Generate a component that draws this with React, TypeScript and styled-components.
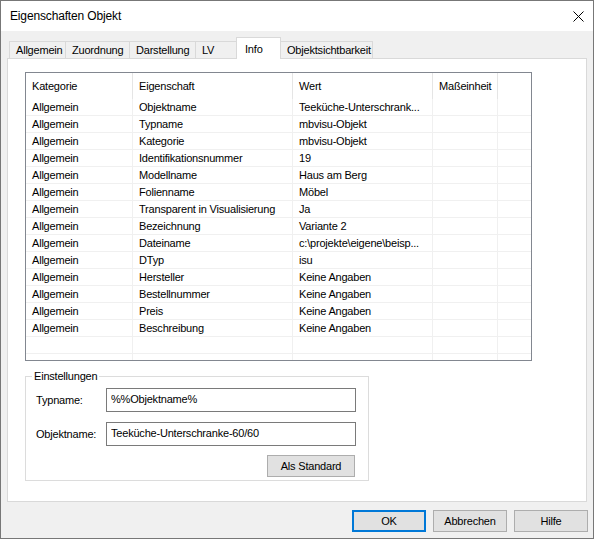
import React from "react";
import styled, { createGlobalStyle, css } from "styled-components";

const GlobalStyle = createGlobalStyle`
  body {
    margin: 0;
    background: #fff;
    font-family: "Liberation Sans", Arial, sans-serif;
    font-size: 11px;
    letter-spacing: -0.2px;
    color: #000;
  }
`;

const Window = styled.div`
  width: 594px;
  height: 539px;
  box-sizing: border-box;
  border: 1px solid #777;
  background: #f0f0f0;
  display: flex;
  flex-direction: column;
`;

const TitleBar = styled.div`
  height: 30px;
  flex: none;
  background: #fff;
  display: flex;
  align-items: center;
  justify-content: space-between;
  padding: 0 9px 0 9px;
  font-size: 12px;
  letter-spacing: -0.15px;
`;

const Body = styled.div`
  flex: 1;
  padding: 6px 6px 0 6px;
  display: flex;
  flex-direction: column;
`;

const TabStrip = styled.div`
  display: flex;
  align-items: flex-end;
  height: 21px;
  padding-left: 2px;
`;

const Tab = styled.div<{ $w: number; $active?: boolean }>`
  box-sizing: border-box;
  width: ${p => p.$w}px;
  height: 17px;
  margin-left: -1px;
  padding-left: 6px;
  border: 1px solid #d9d9d9;
  border-bottom: none;
  background: #f0f0f0;
  display: flex;
  align-items: center;
  white-space: nowrap;
  &:first-child {
    margin-left: 0;
  }

  ${p =>
    p.$active &&
    css`
      height: 22px;
      margin-bottom: -1px;
      padding-left: 8px;
      background: #fff;
      position: relative;
      z-index: 1;
    `}
`;

const Panel = styled.div`
  box-sizing: border-box;
  width: 580px;
  height: 444px;
  background: #fff;
  border: 1px solid #d9d9d9;
  padding: 13px 0 0 17px;
`;

const ListView = styled.div`
  box-sizing: border-box;
  width: 507px;
  height: 289px;
  border: 1px solid #828790;
  overflow: hidden;
  background: #fff;
`;

const COLS = "107px 160px 140px 65px 1fr";

const HeaderRow = styled.div`
  display: grid;
  grid-template-columns: ${COLS};
  height: 26px;
`;

const HeaderCell = styled.div`
  display: flex;
  align-items: center;
  padding-left: 6px;
  border-right: 1px solid #e5e5e5;
  &:last-child {
    border-right: none;
  }
`;

const Row = styled.div`
  display: grid;
  grid-template-columns: ${COLS};
  height: 17px;
  box-sizing: border-box;
  border-bottom: 1px solid #f0f0f0;
`;

const Cell = styled.div`
  display: flex;
  align-items: center;
  padding-left: 6px;
  white-space: nowrap;
  overflow: hidden;
  border-right: 1px solid #f0f0f0;
  &:last-child {
    border-right: none;
  }
`;

const GroupBox = styled.fieldset`
  box-sizing: border-box;
  width: 344px;
  margin: 9px 0 0 0;
  padding: 5px 12px 3px 6px;
  border: 1px solid #dcdcdc;
  min-width: 0;
`;

const Legend = styled.legend`
  padding: 0 2px;
  line-height: 13px;
`;

const FieldRow = styled.div<{ $gap?: number }>`
  display: flex;
  align-items: center;
  height: 24px;
  padding-left: 4px;
  margin-top: ${p => p.$gap ?? 0}px;
`;

const FieldLabel = styled.label`
  width: 70px;
  flex: none;
`;

const TextBox = styled.input`
  flex: 1;
  min-width: 0;
  box-sizing: border-box;
  height: 24px;
  border: 1px solid #7a7a7a;
  padding: 0 0 2px 4px;
  margin: 0;
  font-family: "Liberation Sans", Arial, sans-serif;
  font-size: 11px;
  letter-spacing: -0.2px;
  color: #000;
  background: #fff;
  outline: none;
`;

const ButtonLine = styled.div`
  display: flex;
  justify-content: flex-end;
  margin-top: 9px;
  padding-right: 1px;
`;

const Button = styled.button<{ $w: number; $default?: boolean }>`
  box-sizing: border-box;
  width: ${p => p.$w}px;
  height: 22px;
  margin: 0;
  padding: 0;
  background: #e1e1e1;
  border: 1px solid #adadad;
  font-family: "Liberation Sans", Arial, sans-serif;
  font-size: 11px;
  letter-spacing: -0.2px;
  color: #000;

  ${p =>
    p.$default &&
    css`
      border: 2px solid #0078d7;
    `}
`;

const DialogButtons = styled.div`
  display: flex;
  justify-content: flex-end;
  gap: 7px;
  margin: 8px -1px 0 0;
`;

const tabs = [
  { label: "Allgemein", w: 57 },
  { label: "Zuordnung", w: 65 },
  { label: "Darstellung", w: 67 },
  { label: "LV", w: 42 },
  { label: "Info", w: 45, active: true },
  { label: "Objektsichtbarkeit", w: 93 },
];

const rows: [string, string][] = [
  ["Objektname", "Teeküche-Unterschrank..."],
  ["Typname", "mbvisu-Objekt"],
  ["Kategorie", "mbvisu-Objekt"],
  ["Identifikationsnummer", "19"],
  ["Modellname", "Haus am Berg"],
  ["Folienname", "Möbel"],
  ["Transparent in Visualisierung", "Ja"],
  ["Bezeichnung", "Variante 2"],
  ["Dateiname", "c:\\projekte\\eigene\\beisp..."],
  ["DTyp", "isu"],
  ["Hersteller", "Keine Angaben"],
  ["Bestellnummer", "Keine Angaben"],
  ["Preis", "Keine Angaben"],
  ["Beschreibung", "Keine Angaben"],
];

const CloseIcon = () => (
  <svg width="11" height="11" viewBox="0 0 11 11">
    <path d="M0.5 0.5 L10.5 10.5 M10.5 0.5 L0.5 10.5" stroke="#000" strokeWidth="1" />
  </svg>
);

export default function App() {
  return (
    <>
      <GlobalStyle />
      <Window>
        <TitleBar>
          <span>Eigenschaften Objekt</span>
          <CloseIcon />
        </TitleBar>
        <Body>
          <TabStrip>
            {tabs.map(t => (
              <Tab key={t.label} $w={t.w} $active={t.active}>
                {t.label}
              </Tab>
            ))}
          </TabStrip>
          <Panel>
            <ListView>
              <HeaderRow>
                <HeaderCell>Kategorie</HeaderCell>
                <HeaderCell>Eigenschaft</HeaderCell>
                <HeaderCell>Wert</HeaderCell>
                <HeaderCell>Maßeinheit</HeaderCell>
                <HeaderCell />
              </HeaderRow>
              {rows.map(([prop, value]) => (
                <Row key={prop}>
                  <Cell>Allgemein</Cell>
                  <Cell>{prop}</Cell>
                  <Cell>{value}</Cell>
                  <Cell />
                  <Cell />
                </Row>
              ))}
              {[0, 1].map(i => (
                <Row key={"empty" + i}>
                  <Cell />
                  <Cell />
                  <Cell />
                  <Cell />
                  <Cell />
                </Row>
              ))}
            </ListView>

            <GroupBox>
              <Legend>Einstellungen</Legend>
              <FieldRow>
                <FieldLabel>Typname:</FieldLabel>
                <TextBox readOnly value="%%Objektname%" />
              </FieldRow>
              <FieldRow $gap={10}>
                <FieldLabel>Objektname:</FieldLabel>
                <TextBox readOnly value="Teeküche-Unterschranke-60/60" />
              </FieldRow>
              <ButtonLine>
                <Button $w={88}>Als Standard</Button>
              </ButtonLine>
            </GroupBox>
          </Panel>
          <DialogButtons>
            <Button $w={74} $default>
              OK
            </Button>
            <Button $w={74}>Abbrechen</Button>
            <Button $w={74}>Hilfe</Button>
          </DialogButtons>
        </Body>
      </Window>
    </>
  );
}
